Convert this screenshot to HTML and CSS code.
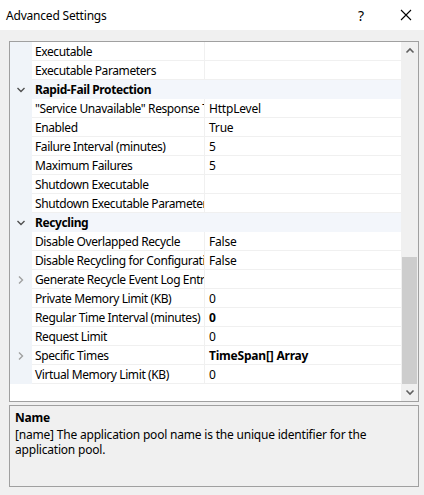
FILE: index.html
```html
<!DOCTYPE html>
<html lang="en">
<head>
    <meta charset="UTF-8">
    <title>Advanced Settings</title>
    <link rel="stylesheet" href="styles.css">
</head>
<body>
    <div class="titlebar">
        <span class="title">Advanced Settings</span>
        <span class="help">?</span>
        <svg class="close" width="12" height="12" viewBox="0 0 12 12"><path d="M1 1 L11 11 M11 1 L1 11" stroke="#000" stroke-width="1.1" fill="none"/></svg>
    </div>

    <div class="content">
        <div class="grid">
            <div class="rows">
                <div class="row"><div class="margin"></div><div class="name">Executable</div><div class="value"></div></div>
                <div class="row"><div class="margin"></div><div class="name">Executable Parameters</div><div class="value"></div></div>
                <div class="row category"><div class="margin"><svg width="10" height="8" viewBox="0 0 10 8"><path d="M1.5 2 L5 5.5 L8.5 2" stroke="#505050" stroke-width="1.4" fill="none"/></svg></div><div class="name">Rapid-Fail Protection</div></div>
                <div class="row"><div class="margin"></div><div class="name">"Service Unavailable" Response Type</div><div class="value">HttpLevel</div></div>
                <div class="row"><div class="margin"></div><div class="name">Enabled</div><div class="value">True</div></div>
                <div class="row"><div class="margin"></div><div class="name">Failure Interval (minutes)</div><div class="value">5</div></div>
                <div class="row"><div class="margin"></div><div class="name">Maximum Failures</div><div class="value">5</div></div>
                <div class="row"><div class="margin"></div><div class="name">Shutdown Executable</div><div class="value"></div></div>
                <div class="row"><div class="margin"></div><div class="name">Shutdown Executable Parameters</div><div class="value"></div></div>
                <div class="row category"><div class="margin"><svg width="10" height="8" viewBox="0 0 10 8"><path d="M1.5 2 L5 5.5 L8.5 2" stroke="#505050" stroke-width="1.4" fill="none"/></svg></div><div class="name">Recycling</div></div>
                <div class="row"><div class="margin"></div><div class="name">Disable Overlapped Recycle</div><div class="value">False</div></div>
                <div class="row"><div class="margin"></div><div class="name">Disable Recycling for Configuration Changes</div><div class="value">False</div></div>
                <div class="row"><div class="margin"><svg width="8" height="10" viewBox="0 0 8 10"><path d="M2 1.5 L5.5 5 L2 8.5" stroke="#a0a0a0" stroke-width="1.4" fill="none"/></svg></div><div class="name">Generate Recycle Event Log Entry</div><div class="value"></div></div>
                <div class="row"><div class="margin"></div><div class="name">Private Memory Limit (KB)</div><div class="value">0</div></div>
                <div class="row"><div class="margin"></div><div class="name">Regular Time Interval (minutes)</div><div class="value bold">0</div></div>
                <div class="row"><div class="margin"></div><div class="name">Request Limit</div><div class="value">0</div></div>
                <div class="row"><div class="margin"><svg width="8" height="10" viewBox="0 0 8 10"><path d="M2 1.5 L5.5 5 L2 8.5" stroke="#a0a0a0" stroke-width="1.4" fill="none"/></svg></div><div class="name">Specific Times</div><div class="value bold">TimeSpan[] Array</div></div>
                <div class="row"><div class="margin"></div><div class="name">Virtual Memory Limit (KB)</div><div class="value">0</div></div>
            </div>
            <div class="scrollbar">
                <div class="arrow"><svg width="10" height="7" viewBox="0 0 10 7"><path d="M1.5 5.5 L5 2 L8.5 5.5" stroke="#606060" stroke-width="1.6" fill="none"/></svg></div>
                <div class="track"><div class="thumb"></div></div>
                <div class="arrow"><svg width="10" height="7" viewBox="0 0 10 7"><path d="M1.5 1.5 L5 5 L8.5 1.5" stroke="#606060" stroke-width="1.6" fill="none"/></svg></div>
            </div>
        </div>

        <div class="description">
            <div class="desc-title">Name</div>
            <div class="desc-text">[name] The application pool name is the unique identifier for the application pool.</div>
        </div>
    </div>
</body>
</html>
```

FILE: styles.css
```css
body {
    margin: 0;
    width: 424px;
    height: 495px;
    background: #f0f0f0;
    font-family: "Noto Sans", "Open Sans", sans-serif;
    font-size: 12px;
    letter-spacing: -0.2px;
    color: #000;
    overflow: hidden;
}
.titlebar {
    height: 30px;
    background: #fff;
    display: flex;
    align-items: center;
    padding-left: 6px;
}
.title {
    flex: 1;
    font-size: 12px;
}
.help {
    font-size: 14px;
    margin-right: 36px;
}
.close {
    margin-right: 12px;
}
.content {
    padding: 11px 0 0 9px;
}
.grid {
    width: 408px;
    height: 359px;
    border: 1px solid #a0a0a0;
    background: #fff;
    display: flex;
}
.rows {
    width: 391px;
}
.row {
    display: flex;
    height: 19px;
}
.margin {
    width: 22px;
    flex-shrink: 0;
    background: #f0f4f9;
    display: flex;
    align-items: center;
    justify-content: center;
}
.name {
    width: 169px;
    flex-shrink: 0;
    padding: 1px 0 0 3px;
    line-height: 17px;
    letter-spacing: -0.4px;
    border-right: 1px solid #f0f0f0;
    border-bottom: 1px solid #f0f0f0;
    white-space: nowrap;
    overflow: hidden;
}
.value {
    flex: 1;
    padding: 1px 0 0 4px;
    line-height: 17px;
    border-bottom: 1px solid #f0f0f0;
    white-space: nowrap;
}
.bold {
    font-weight: bold;
}
.category {
    background: #f3f6fb;
}
.category .name {
    flex: 1;
    font-weight: bold;
    border-right: none;
    border-bottom: none;
}
.scrollbar {
    width: 17px;
    background: #f0f0f0;
    display: flex;
    flex-direction: column;
}
.arrow {
    height: 17px;
    display: flex;
    align-items: center;
    justify-content: center;
}
.track {
    flex: 1;
    display: flex;
    flex-direction: column;
    justify-content: flex-end;
    padding: 0 1px;
}
.thumb {
    height: 127px;
    background: #cdcdcd;
}
.description {
    margin-top: 3px;
    width: 398px;
    height: 72px;
    border: 1px solid #a0a0a0;
    padding: 4px 5px;
    line-height: 15px;
}
.desc-title {
    font-weight: bold;
    margin-bottom: 2px;
}
```
